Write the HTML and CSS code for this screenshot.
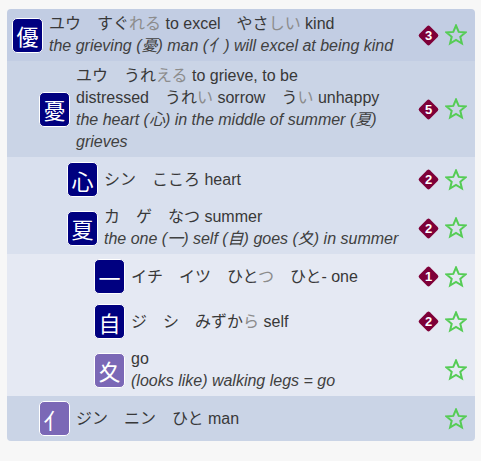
FILE: index.html
```html
<!DOCTYPE html>
<html lang="ja">
<head>
<meta charset="utf-8">
<title>Kanji tree</title>
<link rel="stylesheet" href="styles.css">
</head>
<body>
<div class="tree">
  <div class="row d0">
    <span class="kanji navy">優</span>
    <div class="info">
      <div class="readings">ユウ　すぐ<span class="oku">れる</span> to excel　やさ<span class="oku">しい</span> kind</div>
      <div class="mnemonic">the grieving (憂) man (亻) will excel at being kind</div>
    </div>
    <span class="slot"><span class="badge"><span>3</span></span></span>
    <svg class="star" viewBox="0 0 22 22"><polygon points="11,1.5 13.7,7.9 20.5,8.4 15.3,12.8 16.9,19.5 11,15.9 5.1,19.5 6.7,12.8 1.5,8.4 8.3,7.9"/></svg>
  </div>
  <div class="row d1">
    <span class="kanji navy">憂</span>
    <div class="info">
      <div class="readings">ユウ　うれ<span class="oku">える</span> to grieve, to be<br>distressed　うれ<span class="oku">い</span> sorrow　う<span class="oku">い</span> unhappy</div>
      <div class="mnemonic">the heart (心) in the middle of summer (夏) grieves</div>
    </div>
    <span class="slot"><span class="badge"><span>5</span></span></span>
    <svg class="star" viewBox="0 0 22 22"><polygon points="11,1.5 13.7,7.9 20.5,8.4 15.3,12.8 16.9,19.5 11,15.9 5.1,19.5 6.7,12.8 1.5,8.4 8.3,7.9"/></svg>
  </div>
  <div class="row d2">
    <span class="kanji navy">心</span>
    <div class="info">
      <div class="readings">シン　こころ heart</div>
    </div>
    <span class="slot"><span class="badge"><span>2</span></span></span>
    <svg class="star" viewBox="0 0 22 22"><polygon points="11,1.5 13.7,7.9 20.5,8.4 15.3,12.8 16.9,19.5 11,15.9 5.1,19.5 6.7,12.8 1.5,8.4 8.3,7.9"/></svg>
  </div>
  <div class="row d2">
    <span class="kanji navy">夏</span>
    <div class="info">
      <div class="readings">カ　ゲ　なつ summer</div>
      <div class="mnemonic">the one (一) self (自) goes (夊) in summer</div>
    </div>
    <span class="slot"><span class="badge"><span>2</span></span></span>
    <svg class="star" viewBox="0 0 22 22"><polygon points="11,1.5 13.7,7.9 20.5,8.4 15.3,12.8 16.9,19.5 11,15.9 5.1,19.5 6.7,12.8 1.5,8.4 8.3,7.9"/></svg>
  </div>
  <div class="row d3">
    <span class="kanji navy">一</span>
    <div class="info">
      <div class="readings">イチ　イツ　ひと<span class="oku">つ</span>　ひと- one</div>
    </div>
    <span class="slot"><span class="badge"><span>1</span></span></span>
    <svg class="star" viewBox="0 0 22 22"><polygon points="11,1.5 13.7,7.9 20.5,8.4 15.3,12.8 16.9,19.5 11,15.9 5.1,19.5 6.7,12.8 1.5,8.4 8.3,7.9"/></svg>
  </div>
  <div class="row d3">
    <span class="kanji navy">自</span>
    <div class="info">
      <div class="readings">ジ　シ　みずか<span class="oku">ら</span> self</div>
    </div>
    <span class="slot"><span class="badge"><span>2</span></span></span>
    <svg class="star" viewBox="0 0 22 22"><polygon points="11,1.5 13.7,7.9 20.5,8.4 15.3,12.8 16.9,19.5 11,15.9 5.1,19.5 6.7,12.8 1.5,8.4 8.3,7.9"/></svg>
  </div>
  <div class="row d3">
    <span class="kanji purple">夊</span>
    <div class="info">
      <div class="readings">go</div>
      <div class="mnemonic">(looks like) walking legs = go</div>
    </div>
    <span class="slot"></span>
    <svg class="star" viewBox="0 0 22 22"><polygon points="11,1.5 13.7,7.9 20.5,8.4 15.3,12.8 16.9,19.5 11,15.9 5.1,19.5 6.7,12.8 1.5,8.4 8.3,7.9"/></svg>
  </div>
  <div class="row d1">
    <span class="kanji purple">亻</span>
    <div class="info">
      <div class="readings">ジン　ニン　ひと man</div>
    </div>
    <span class="slot"></span>
    <svg class="star" viewBox="0 0 22 22"><polygon points="11,1.5 13.7,7.9 20.5,8.4 15.3,12.8 16.9,19.5 11,15.9 5.1,19.5 6.7,12.8 1.5,8.4 8.3,7.9"/></svg>
  </div>
</div>
</body>
</html>
```

FILE: styles.css
```css
html, body {
  margin: 0;
  padding: 0;
  background: #f7f7f7;
}

body {
  padding: 9px 6px 0 7px;
  font-family: "Liberation Sans", Arial, "Noto Sans CJK JP", sans-serif;
  font-size: 16px;
  color: #383838;
}

.tree {
  border-radius: 4px;
  overflow: hidden;
}

.row {
  display: flex;
  align-items: center;
  padding: 4px 8px 4px 5px;
}

.d0 { background: #c2cde3; padding-left: 5px; }
.d1 { background: #cad4e6; padding-left: 32px; }
.d2 { background: #d9e0ee; padding-left: 60px; }
.d3 { background: #e5e9f3; padding-left: 87px; }

.kanji {
  flex: none;
  box-sizing: border-box;
  width: 31px;
  height: 35px;
  margin: 1px 6px 1px 0;
  border: 1px solid #fff;
  border-radius: 5px;
  display: flex;
  align-items: center;
  justify-content: center;
  color: #fff;
  font-family: "Noto Sans CJK JP", sans-serif;
  font-size: 22px;
  line-height: 1;
}

.navy { background: #000080; }
.purple { background: #7b68b6; }

.info {
  flex: 1;
  min-width: 0;
  margin-right: 8px;
  line-height: 22px;
}

.oku { color: #8c8c8c; }

.mnemonic {
  font-style: italic;
  color: #404040;
}

.slot {
  flex: none;
  width: 20px;
  height: 20px;
  margin-right: 7px;
  display: flex;
  align-items: center;
  justify-content: center;
}

.badge {
  width: 15px;
  height: 15px;
  background: #7e0038;
  border-radius: 2px;
  transform: rotate(45deg);
  display: flex;
  align-items: center;
  justify-content: center;
}

.badge span {
  transform: rotate(-45deg);
  color: #fff;
  font-family: "Liberation Sans", Arial, sans-serif;
  font-weight: bold;
  font-size: 13px;
  line-height: 1;
}

.star {
  flex: none;
  width: 22px;
  height: 22px;
  fill: none;
  stroke: #55cc55;
  stroke-width: 2;
  stroke-linejoin: miter;
}
```
